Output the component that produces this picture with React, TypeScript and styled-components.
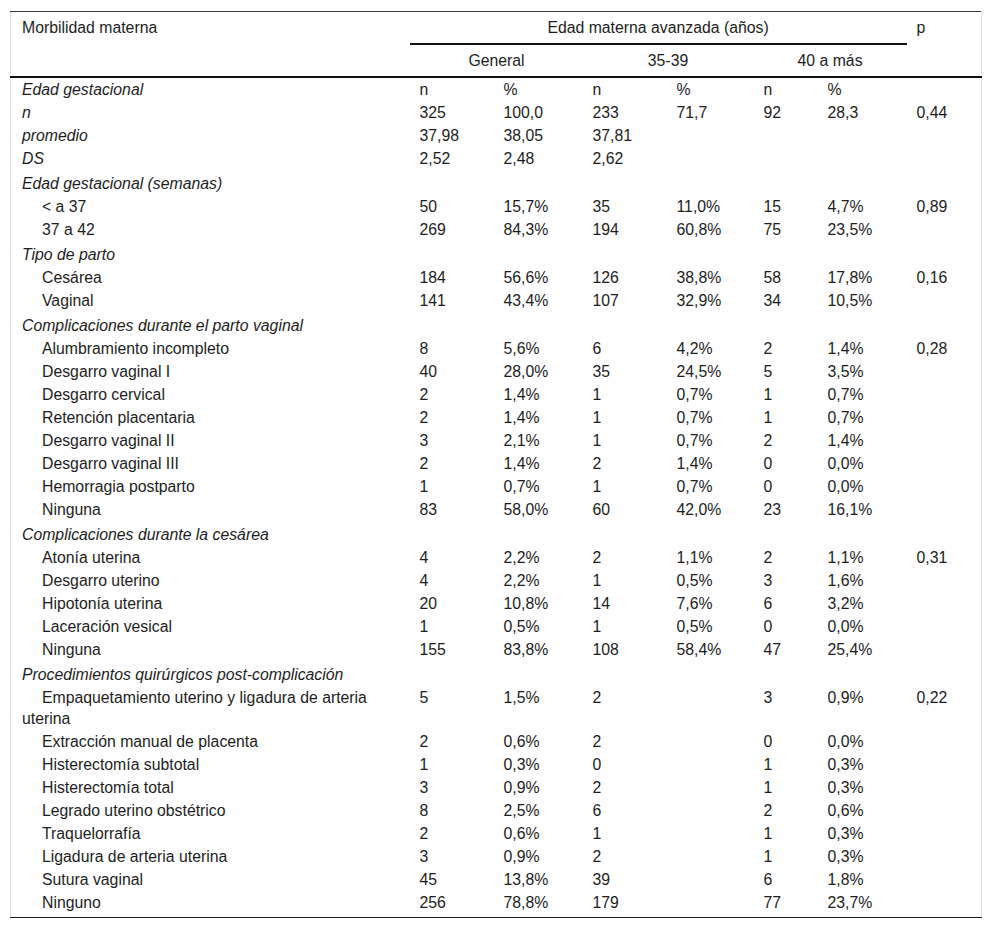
import styled, { createGlobalStyle } from "styled-components";

type Row = {
  label: string;
  kind: "section" | "stat" | "item";
  cells?: string[];
  p?: string;
  first?: boolean;
};

const rows: Row[] = [
  { label: "Edad gestacional", kind: "section", first: true, cells: ["n", "%", "n", "%", "n", "%"] },
  { label: "n", kind: "stat", cells: ["325", "100,0", "233", "71,7", "92", "28,3"], p: "0,44" },
  { label: "promedio", kind: "stat", cells: ["37,98", "38,05", "37,81", "", "", ""] },
  { label: "DS", kind: "stat", cells: ["2,52", "2,48", "2,62", "", "", ""] },
  { label: "Edad gestacional (semanas)", kind: "section" },
  { label: "< a 37", kind: "item", cells: ["50", "15,7%", "35", "11,0%", "15", "4,7%"], p: "0,89" },
  { label: "37 a 42", kind: "item", cells: ["269", "84,3%", "194", "60,8%", "75", "23,5%"] },
  { label: "Tipo de parto", kind: "section" },
  { label: "Cesárea", kind: "item", cells: ["184", "56,6%", "126", "38,8%", "58", "17,8%"], p: "0,16" },
  { label: "Vaginal", kind: "item", cells: ["141", "43,4%", "107", "32,9%", "34", "10,5%"] },
  { label: "Complicaciones durante el parto vaginal", kind: "section" },
  { label: "Alumbramiento incompleto", kind: "item", cells: ["8", "5,6%", "6", "4,2%", "2", "1,4%"], p: "0,28" },
  { label: "Desgarro vaginal I", kind: "item", cells: ["40", "28,0%", "35", "24,5%", "5", "3,5%"] },
  { label: "Desgarro cervical", kind: "item", cells: ["2", "1,4%", "1", "0,7%", "1", "0,7%"] },
  { label: "Retención placentaria", kind: "item", cells: ["2", "1,4%", "1", "0,7%", "1", "0,7%"] },
  { label: "Desgarro vaginal II", kind: "item", cells: ["3", "2,1%", "1", "0,7%", "2", "1,4%"] },
  { label: "Desgarro vaginal III", kind: "item", cells: ["2", "1,4%", "2", "1,4%", "0", "0,0%"] },
  { label: "Hemorragia postparto", kind: "item", cells: ["1", "0,7%", "1", "0,7%", "0", "0,0%"] },
  { label: "Ninguna", kind: "item", cells: ["83", "58,0%", "60", "42,0%", "23", "16,1%"] },
  { label: "Complicaciones durante la cesárea", kind: "section" },
  { label: "Atonía uterina", kind: "item", cells: ["4", "2,2%", "2", "1,1%", "2", "1,1%"], p: "0,31" },
  { label: "Desgarro uterino", kind: "item", cells: ["4", "2,2%", "1", "0,5%", "3", "1,6%"] },
  { label: "Hipotonía uterina", kind: "item", cells: ["20", "10,8%", "14", "7,6%", "6", "3,2%"] },
  { label: "Laceración vesical", kind: "item", cells: ["1", "0,5%", "1", "0,5%", "0", "0,0%"] },
  { label: "Ninguna", kind: "item", cells: ["155", "83,8%", "108", "58,4%", "47", "25,4%"] },
  { label: "Procedimientos quirúrgicos post-complicación", kind: "section" },
  {
    label: "Empaquetamiento uterino y ligadura de arteria uterina",
    kind: "item",
    cells: ["5", "1,5%", "2", "", "3", "0,9%"],
    p: "0,22",
  },
  { label: "Extracción manual de placenta", kind: "item", cells: ["2", "0,6%", "2", "", "0", "0,0%"] },
  { label: "Histerectomía subtotal", kind: "item", cells: ["1", "0,3%", "0", "", "1", "0,3%"] },
  { label: "Histerectomía total", kind: "item", cells: ["3", "0,9%", "2", "", "1", "0,3%"] },
  { label: "Legrado uterino obstétrico", kind: "item", cells: ["8", "2,5%", "6", "", "2", "0,6%"] },
  { label: "Traquelorrafía", kind: "item", cells: ["2", "0,6%", "1", "", "1", "0,3%"] },
  { label: "Ligadura de arteria uterina", kind: "item", cells: ["3", "0,9%", "2", "", "1", "0,3%"] },
  { label: "Sutura vaginal", kind: "item", cells: ["45", "13,8%", "39", "", "6", "1,8%"] },
  { label: "Ninguno", kind: "item", cells: ["256", "78,8%", "179", "", "77", "23,7%"] },
];

const colWidths = [399, 84, 89, 84, 87, 64, 89, 75];

export default function App() {
  return (
    <>
      <GlobalStyle />
      <Page>
        <Table>
          <colgroup>
            {colWidths.map((w, i) => (
              <col key={i} style={{ width: w }} />
            ))}
          </colgroup>
          <thead>
            <tr>
              <HeadCell rowSpan={2} $underline>
                Morbilidad materna
              </HeadCell>
              <HeadCell colSpan={6} $center $underline>
                Edad materna avanzada (años)
              </HeadCell>
              <HeadCell rowSpan={2} $underline>
                p
              </HeadCell>
            </tr>
            <tr>
              <HeadCell colSpan={2} $center $underline>
                General
              </HeadCell>
              <HeadCell colSpan={2} $center $underline>
                35-39
              </HeadCell>
              <HeadCell colSpan={2} $center $underline>
                40 a más
              </HeadCell>
            </tr>
          </thead>
          <tbody>
            {rows.map((r, i) => {
              const spaced = r.kind === "section" && !r.first;
              const cells = r.cells ?? ["", "", "", "", "", ""];
              return (
                <BodyRow key={i} $spaced={spaced} $last={i === rows.length - 1}>
                  <LabelCell $kind={r.kind}>{r.label}</LabelCell>
                  {cells.map((c, j) => (
                    <Cell key={j}>{c}</Cell>
                  ))}
                  <Cell>{r.p ?? ""}</Cell>
                </BodyRow>
              );
            })}
          </tbody>
        </Table>
      </Page>
    </>
  );
}

const GlobalStyle = createGlobalStyle`
  body {
    margin: 0;
    background: #fff;
    font-family: "Liberation Sans", Arial, sans-serif;
    color: #1d1d1d;
  }
`;

const Page = styled.div`
  padding: 11px 11px 12px 10px;
`;

const Table = styled.table`
  width: 971px;
  table-layout: fixed;
  border-collapse: collapse;
  border-top: 1px solid #3a3a3a;
  border-bottom: 1px solid #1d1d1d;
  border-left: 1px solid #e2e2e2;
  border-right: 1px solid #e2e2e2;
  font-size: 15.8px;
  line-height: 21px;
`;

const HeadCell = styled.th<{ $center?: boolean; $underline?: boolean }>`
  font-weight: normal;
  text-align: ${(p) => (p.$center ? "center" : "left")};
  vertical-align: top;
  padding: 5px 10px 5px 10px;
  border-bottom: ${(p) => (p.$underline ? "2px solid #111" : "none")};

  &:first-child {
    padding-left: 11px;
  }
`;

const BodyRow = styled.tr<{ $spaced?: boolean; $last?: boolean }>`
  td {
    padding-top: ${(p) => (p.$spaced ? "3px" : "1px")};
    padding-bottom: ${(p) => (p.$last ? "4px" : "1px")};
  }
`;

const Cell = styled.td`
  vertical-align: top;
  padding-left: 10px;
  padding-right: 6px;
  white-space: nowrap;
`;

const LabelCell = styled.td<{ $kind: Row["kind"] }>`
  vertical-align: top;
  padding-left: 11px;
  padding-right: 10px;
  font-style: ${(p) => (p.$kind === "item" ? "normal" : "italic")};
  text-indent: ${(p) => (p.$kind === "item" ? "20px" : "0")};
`;
